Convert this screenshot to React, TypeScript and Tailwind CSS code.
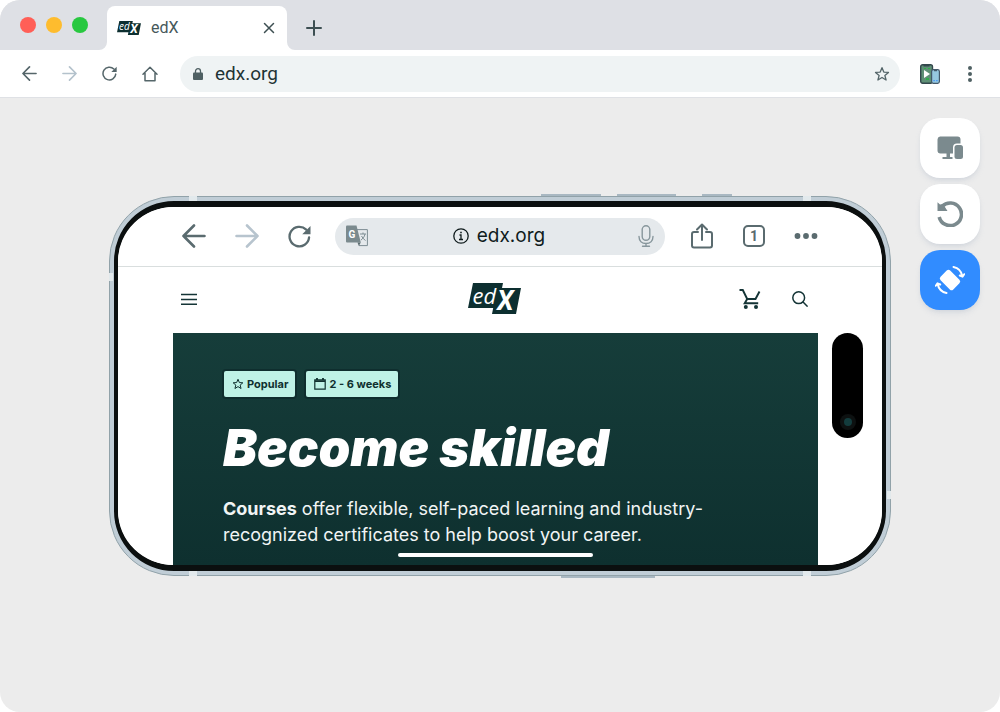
import React from 'react';

type IconProps = {
  className?: string;
};

const BackIcon: React.FC<IconProps> = ({ className }) => (
  <svg className={className} viewBox="0 0 24 24" fill="none" stroke="currentColor" strokeWidth="2.6" strokeLinecap="round" strokeLinejoin="round">
    <path d="M22.500 12H1.500M12 1.500 1.500 12 12 22.500" />
  </svg>
);

const ForwardIcon: React.FC<IconProps> = ({ className }) => (
  <svg className={className} viewBox="0 0 24 24" fill="none" stroke="currentColor" strokeWidth="2.6" strokeLinecap="round" strokeLinejoin="round">
    <path d="M1.500 12h21M12 1.500 22.500 12 12 22.500" />
  </svg>
);

const ReloadIcon: React.FC<IconProps> = ({ className }) => (
  <svg className={className} viewBox="0 0 24 24" fill="none">
    <path d="M22 13A10.200 10.200 0 1 1 19 4.800" stroke="currentColor" strokeWidth="2.4" strokeLinecap="round" />
    <path d="M23.500 1v8.600h-8.600z" fill="currentColor" />
  </svg>
);

const StarIcon: React.FC<IconProps> = ({ className }) => (
  <svg className={className} viewBox="0 0 24 24" fill="none" stroke="currentColor" strokeWidth="2" strokeLinejoin="round">
    <path d="m12 2.500 2.700 6.600 7 .5-5.400 4.500 1.800 6.900L12 17.200 5.900 21l1.800-6.900L2.300 9.600l7-.5z" />
  </svg>
);

const EdxLogo: React.FC<IconProps> = ({ className }) => (
  <svg className={className} viewBox="0 0 53 31" overflow="visible" role="img" aria-label="edX">
    <path d="M5 0h30l-1 5h19l-5 26H24l1.200-6H0z" fill="#0d2f30" />
    <text x="4.500" y="20.500" fill="#ffffff" fontFamily="Open Sans, sans-serif" fontStyle="italic" fontSize="22">ed</text>
    <text x="29" y="27" fill="#ffffff" fontFamily="Roboto, sans-serif" fontStyle="italic" fontWeight="700" fontSize="27">X</text>
  </svg>
);

const TabStrip: React.FC = () => (
  <div className="flex h-[50px] items-end bg-[#dee0e5]">
    {/* Window buttons */}
    <div className="flex w-[107px] items-center gap-[10px] self-start pt-[17px] pl-5">
      <button aria-label="Close window" className="size-4 rounded-full bg-[#ff5f57]" />
      <button aria-label="Minimize window" className="size-4 rounded-full bg-[#febc2e]" />
      <button aria-label="Maximize window" className="size-4 rounded-full bg-[#28c840]" />
    </div>

    {/* Active tab */}
    <div className="relative flex h-11 w-[180px] items-center rounded-t-lg bg-white pl-[10px] pr-3">
      <svg className="absolute bottom-0 -left-2 size-2" viewBox="0 0 8 8">
        <path d="M8 0v8H0a8 8 0 0 0 8-8z" fill="#ffffff" />
      </svg>
      <svg className="absolute bottom-0 -right-2 size-2" viewBox="0 0 8 8">
        <path d="M0 0v8h8a8 8 0 0 1-8-8z" fill="#ffffff" />
      </svg>
      <EdxLogo className="h-[14px] w-6" />
      <span className="ml-[10px] flex-1 text-base text-[#46585b]">edX</span>
      <button aria-label="Close tab" className="text-[#3d4f52]">
        <svg className="size-3" viewBox="0 0 12 12" fill="none" stroke="currentColor" strokeWidth="1.500" strokeLinecap="round">
          <path d="m1.500 1.500 9 9M10.500 1.500l-9 9" />
        </svg>
      </button>
    </div>

    <button aria-label="New tab" className="mb-[14px] ml-[19px] text-[#3d4f52]">
      <svg className="size-4" viewBox="0 0 16 16" fill="none" stroke="currentColor" strokeWidth="2" strokeLinecap="round">
        <path d="M8 1v14M1 8h14" />
      </svg>
    </button>
  </div>
);

const AddressBar: React.FC = () => (
  <div className="flex h-12 items-center border-b border-[#dfe1e5] bg-white pl-[22px] pr-5 text-[#55666a]">
    <div className="flex items-center gap-[25px]">
      <button aria-label="Back"><BackIcon className="size-[15px]" /></button>
      <button aria-label="Forward" className="text-[#b4c2cc]"><ForwardIcon className="size-[15px]" /></button>
      <button aria-label="Reload"><ReloadIcon className="size-[15px]" /></button>
      <button aria-label="Home">
        <svg className="size-4" viewBox="0 0 16 16" fill="none" stroke="currentColor" strokeWidth="1.500" strokeLinejoin="round" strokeLinecap="round">
          <path d="M1 8.200 8 1.200l7 7M3 7v7.800h10V7" />
        </svg>
      </button>
    </div>

    <div className="ml-[22px] flex h-9 flex-1 items-center rounded-full bg-[#eff3f4] pl-[13px] pr-[10px]">
      <svg className="h-3 w-[10px]" viewBox="0 0 10 12">
        <path d="M2.500 5V3.200a2.500 2.500 0 0 1 5 0V5" fill="none" stroke="#4f6063" strokeWidth="1.300" />
        <rect y="4.600" width="10" height="7.400" rx="1" fill="#4f6063" />
      </svg>
      <input
        aria-label="Address"
        defaultValue="edx.org"
        className="ml-3 min-w-0 flex-1 bg-transparent text-[19px] leading-6 text-[#1f3335] outline-none"
      />
      <button aria-label="Bookmark"><StarIcon className="size-4" /></button>
    </div>

    <button aria-label="Mobile simulator" className="ml-5">
      <svg className="size-5" viewBox="0 0 20 20">
        <rect x="0.700" y="0.700" width="11.800" height="18.600" rx="2" fill="#5f9076" stroke="#33474c" strokeWidth="1.400" />
        <path d="M3.500 1h6v1.500h-6z" fill="#33474c" />
        <path d="M4 6v8l6-4z" fill="#ffffff" />
        <path d="M4 4h2v1H4zM8 4h2v1H8zM6 14h3v2H6z" fill="#2fae4a" />
        <rect x="11.600" y="5.600" width="7.800" height="13.800" rx="1.800" fill="#96c8e0" stroke="#44596a" strokeWidth="1.200" />
        <path d="M14 6h3v1.200h-3z" fill="#44596a" />
        <path d="M13.500 16h1.200v1.200h-1.200zM16.300 16h1.200v1.200h-1.200z" fill="#2f8cff" />
      </svg>
    </button>
    <button aria-label="Menu" className="ml-5 w-5">
      <svg className="mx-auto h-4 w-1 text-[#4f6063]" viewBox="0 0 4 16" fill="currentColor">
        <circle cx="2" cy="2" r="2" />
        <circle cx="2" cy="8" r="2" />
        <circle cx="2" cy="14" r="2" />
      </svg>
    </button>
  </div>
);

const PhoneToolbar: React.FC = () => (
  <div className="flex h-[60px] items-center border-b border-[#d9dede] px-16 pb-px text-[#5a6b6f]">
    <button aria-label="Back in page"><BackIcon className="size-6" /></button>
    <button aria-label="Forward in page" className="ml-[29px] text-[#b7c4ce]"><ForwardIcon className="size-6" /></button>
    <button aria-label="Reload page" className="ml-[29px]"><ReloadIcon className="size-[23px]" /></button>

    <div className="ml-6 flex h-[37px] flex-1 items-center rounded-full bg-[#e5e9ec] px-[11px]">
      <button aria-label="Translate">
        <svg className="h-[22px] w-[22px]" viewBox="0 0 22 22">
          <path d="M11 4.600h10.400v16H13" fill="none" stroke="#7d8d93" strokeWidth="1" />
          <path d="M0 1.500Q0 .5 1 .5h9.500l4.300 17H1q-1 0-1-1z" fill="#7b8a8e" />
          <path d="M11.500 17.500h3.300l-2 3.500z" fill="#5d6d71" />
          <text x="2.500" y="13" fontSize="10" fontWeight="700" fill="#ffffff" fontFamily="Roboto, sans-serif">G</text>
          <path d="M14 9h6M17 7.500V9M19 9c-.5 3-2.500 5-4 6M15.500 11c1 2 2.500 3.500 4 4.500" stroke="#7d8d93" strokeWidth="1" fill="none" />
        </svg>
      </button>
      <span className="flex flex-1 items-center justify-center gap-2 pr-2 text-[#101c1d]">
        <svg className="size-4" viewBox="0 0 16 16" fill="none" stroke="currentColor">
          <circle cx="8" cy="8" r="7.200" strokeWidth="1.300" />
          <path d="M6.500 7H8v4.500M6 11.500h4" strokeWidth="1.300" />
          <path d="M7.200 4.500h1.600" strokeWidth="1.600" />
        </svg>
        <span className="font-[Inter,sans-serif] text-[19px] leading-6">edx.org</span>
      </span>
      <button aria-label="Voice search" className="text-[#87969c]">
        <svg className="h-[22px] w-4" viewBox="0 0 16 22" fill="none" stroke="currentColor" strokeWidth="1.400" strokeLinecap="round">
          <rect x="4.200" y="0.800" width="7.600" height="14.500" rx="3.800" />
          <path d="M1 11.500c0 4.500 3 7 7 7s7-2.500 7-7M8 18.500v2.700M4.500 21.200h7" />
        </svg>
      </button>
    </div>

    <button aria-label="Share" className="ml-[26px]">
      <svg className="h-[26px] w-[22px]" viewBox="0 0 22 26" fill="none" stroke="currentColor" strokeWidth="2" strokeLinecap="round" strokeLinejoin="round">
        <path d="M7 9H3a2 2 0 0 0-2 2v11.500a2 2 0 0 0 2 2h16a2 2 0 0 0 2-2V11a2 2 0 0 0-2-2h-4M11 17V1.500M6 6.500l5-5 5 5" />
      </svg>
    </button>
    <button
      aria-label="Open tabs"
      className="ml-[30px] flex size-[22px] items-center justify-center rounded-[5px] border-2 border-[#5a6b6f] font-[Roboto,sans-serif] text-sm font-bold"
    >
      1
    </button>
    <button aria-label="More" className="ml-[29px]">
      <svg className="h-6 w-6" viewBox="0 0 24 24" fill="currentColor">
        <circle cx="3.500" cy="12" r="2.900" />
        <circle cx="12" cy="12" r="2.900" />
        <circle cx="20.500" cy="12" r="2.900" />
      </svg>
    </button>
  </div>
);

const SiteHeader: React.FC = () => (
  <header className="grid h-[66px] grid-cols-[1fr_auto_1fr] items-center pr-[10px] pb-[3px] pl-2 text-[#143436]">
    <button aria-label="Open menu" className="justify-self-start">
      <svg className="size-4" viewBox="0 0 16 16" fill="none" stroke="currentColor" strokeWidth="1.400">
        <path d="M0 3.500h16M0 8.500h16M0 13.200h16" />
      </svg>
    </button>
    <a href="#home"><EdxLogo className="h-[31px] w-[53px]" /></a>
    <div className="flex items-center gap-[31px] justify-self-end">
      <button aria-label="Cart">
        <svg className="h-5 w-[22px]" viewBox="0 0 22 20" fill="none" stroke="currentColor" strokeWidth="1.900">
          <path d="M.5 1h3.300l4.400 9h8.300l4-7.500M8.200 10l-2.500 4.200h13.500" />
          <circle cx="6.800" cy="18" r="2" fill="currentColor" stroke="none" />
          <circle cx="17" cy="18" r="2" fill="currentColor" stroke="none" />
        </svg>
      </button>
      <button aria-label="Search">
        <svg className="size-4" viewBox="0 0 16 16" fill="none" stroke="currentColor" strokeWidth="1.500">
          <circle cx="6.700" cy="6.700" r="5.900" />
          <path d="m10.800 10.800 4.800 4.800" />
        </svg>
      </button>
    </div>
  </header>
);

const Hero: React.FC = () => (
  <section className="flex-1 bg-linear-to-b from-[#163d3a] to-[#0e302f] pt-[38px] pr-12 pb-4 pl-[50px] font-[Inter,sans-serif] text-white">
    {/* Badges */}
    <div className="flex gap-[11px] pl-px text-[11px] leading-4 font-bold text-[#10302f]">
      <span className="flex h-[26px] items-center gap-[3px] rounded-xs bg-[#bff2e6] pr-[7px] pl-2 ring-2 ring-[#0c2628]/60">
        <StarIcon className="size-3" />
        Popular
      </span>
      <span className="flex h-[26px] items-center gap-[3px] rounded-xs bg-[#bff2e6] pr-[7px] pl-2 ring-2 ring-[#0c2628]/60">
        <svg className="size-3" viewBox="0 0 12 12" fill="none" stroke="currentColor" strokeWidth="1.200">
          <path d="M.8 1.800h10.400v9.400H.8z" />
          <path d="M.8 3.200h10.400M3 0v2M9 0v2" strokeWidth="1.800" />
        </svg>
        2 - 6 weeks
      </span>
    </div>

    <h1 className="mt-5 text-[51px] leading-[62px] font-black italic">Become skilled</h1>
    <p className="mt-[17px] text-lg leading-[26px] text-[#f1f5f5]">
      <strong className="font-bold">Courses</strong> offer flexible, self-paced learning and industry-recognized certificates to help boost your career.
    </p>
  </section>
);

const Phone: React.FC = () => (
  <div className="relative mt-[98px] min-w-0 flex-1">
    {/* Side keys */}
    <span className="absolute -top-[2px] left-[432px] h-1 w-[60px] bg-[#a9b8c2]" />
    <span className="absolute -top-[2px] left-[508px] h-1 w-[59px] bg-[#a9b8c2]" />
    <span className="absolute -top-[2px] left-[593px] h-1 w-[30px] bg-[#a9b8c2]" />
    <span className="absolute -bottom-[2px] left-[452px] h-1 w-[94px] bg-[#a9b8c2]" />

    <div className="relative rounded-[65px] border border-[#91a2a9] bg-[#c0cdd6] p-1">
      {/* Antenna bands */}
      <span className="absolute -top-px left-[79px] h-[5px] w-2 bg-[#e2e9ec]" />
      <span className="absolute -top-px right-[79px] h-[5px] w-2 bg-[#e2e9ec]" />
      <span className="absolute -bottom-px left-[79px] h-[5px] w-2 bg-[#e2e9ec]" />
      <span className="absolute -bottom-px right-[79px] h-[5px] w-2 bg-[#e2e9ec]" />
      <span className="absolute top-[76px] -left-px h-2 w-1 bg-[#e2e9ec]" />
      <span className="absolute -right-px bottom-[76px] h-2 w-1 bg-[#e2e9ec]" />

      <div className="relative rounded-[60px] border-x-4 border-y-[6px] border-[#0b0f0f] bg-white">
        <div className="overflow-hidden rounded-[56px] bg-white">
          <PhoneToolbar />
          <div className="flex min-h-[298px] flex-col pr-16 pl-[55px]">
            <SiteHeader />
            <Hero />
          </div>
        </div>

        {/* Camera island */}
        <div className="absolute top-[126px] right-[19px] flex h-[105px] w-[31px] items-end justify-center rounded-full bg-black pb-2">
          <span className="flex size-4 items-center justify-center rounded-full bg-[#0d1111]">
            <span className="size-2 rounded-full bg-[#133c3d]" />
          </span>
        </div>
        <div className="absolute bottom-2 left-1/2 ml-[-102px] h-1 w-[195px] rounded-full bg-white" />
      </div>
    </div>
  </div>
);

const SideTools: React.FC = () => (
  <div className="mt-5 flex flex-col gap-[6px] self-start text-[#7b8a8e]">
    <button aria-label="Choose device" className="flex size-[60px] items-center justify-center rounded-[20px] bg-white shadow-md shadow-slate-400/20">
      <svg className="size-[26px]" viewBox="0 0 26 26" fill="currentColor">
        <path d="M3 1.500h17.500a3 3 0 0 1 3 3V8.500H20a4 4 0 0 0-4 4v6H3.500a3 3 0 0 1-3-3v-11a3 3 0 0 1 2.500-3z" />
        <path d="M9.500 18h3.500v4h2.500v2H5.500v-2h4z" />
        <rect x="17.500" y="10" width="8.500" height="14" rx="2.500" />
      </svg>
    </button>
    <button aria-label="Reset" className="flex size-[60px] items-center justify-center rounded-[20px] bg-white shadow-md shadow-slate-400/20">
      <svg className="size-[26px]" viewBox="0 0 26 26" fill="none">
        <path d="M2.200 16A11.300 11.300 0 1 0 5 5.500" stroke="currentColor" strokeWidth="3.600" />
        <path d="M.5 1.200 3 3.500 6 3l4.500 7H.5z" fill="currentColor" />
      </svg>
    </button>
    <button aria-label="Rotate device" className="flex size-[60px] items-center justify-center rounded-[20px] bg-[#318cff] text-white shadow-md shadow-slate-400/20">
      <svg className="size-[30px]" viewBox="0 0 30 30" fill="none" stroke="currentColor" strokeWidth="2" strokeLinecap="round" strokeLinejoin="round">
        <rect x="9.200" y="7" width="11.600" height="16" rx="1.500" fill="currentColor" transform="rotate(-45 15 15)" />
        <path d="M18.500 2c5 1 8 4.500 9 9.500M24.800 10.500l2.700 1.200 1.700-2.500" />
        <path d="M11.500 28c-5-1-8-4.500-9-9.500M5.200 19.500 2.500 18.300l-1.700 2.500" />
      </svg>
    </button>
  </div>
);

export default function App() {
  return (
    <div className="bg-white">
      <div className="flex min-h-screen flex-col overflow-hidden rounded-[20px] bg-[#ececec] font-[Roboto,sans-serif]">
        <TabStrip />
        <AddressBar />
        <main className="flex flex-1 items-start gap-[29px] pr-5 pl-[109px]">
          <Phone />
          <SideTools />
        </main>
      </div>
    </div>
  );
}
